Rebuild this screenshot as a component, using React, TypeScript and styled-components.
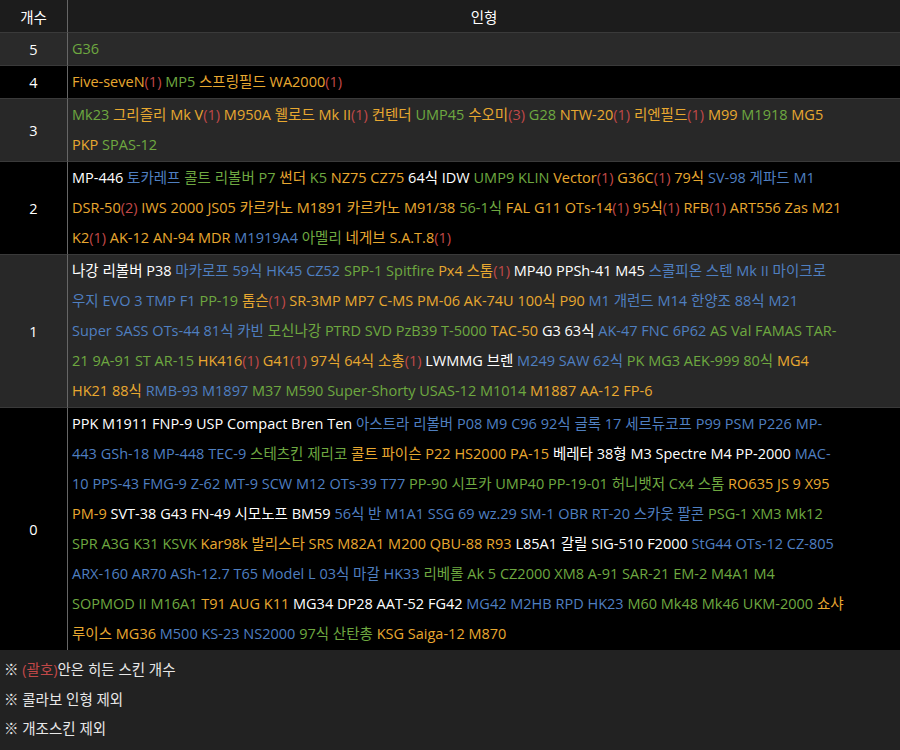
import React from "react";
import styled, { createGlobalStyle } from "styled-components";

const Global = createGlobalStyle`
  html, body { margin: 0; padding: 0; background: #222; }
  body { font-family: "Open Sans", "Noto Sans CJK KR", sans-serif; font-size: 14.5px; color: #fff; }
`;

const C: Record<string, string> = { w: "#ffffff", b: "#4f7fc0", g: "#6ea840", o: "#e8a830", r: "#c04848" };

const data: [string, string, string[]][] = [
  ["5", "#2a2a2a", ["g:G36"]],
  ["4", "#000", ["o:Five-seveN(1)|g:MP5|o:스프링필드|o:WA2000(1)"]],
  ["3", "#282828", [
    "g:Mk23|o:그리즐리 Mk V(1)|o:M950A|o:웰로드 Mk II(1)|o:컨텐더|g:UMP45|o:수오미(3)|g:G28|o:NTW-20(1)|o:리엔필드(1)|o:M99|g:M1918|o:MG5",
    "o:PKP|g:SPAS-12",
  ]],
  ["2", "#000", [
    "w:MP-446|b:토카레프|g:콜트 리볼버|g:P7|o:썬더|g:K5|o:NZ75|o:CZ75|w:64식|w:IDW|g:UMP9|g:KLIN|o:Vector(1)|o:G36C(1)|o:79식|b:SV-98|b:게파드|b:M1",
    "o:DSR-50(2)|o:IWS 2000|o:JS05|o:카르카노 M1891|o:카르카노 M91/38|g:56-1식|o:FAL|o:G11|o:OTs-14(1)|o:95식(1)|o:RFB(1)|o:ART556|o:Zas M21",
    "o:K2(1)|o:AK-12|o:AN-94|o:MDR|b:M1919A4|g:아멜리|o:네게브|o:S.A.T.8(1)",
  ]],
  ["1", "#282828", [
    "w:나강 리볼버|w:P38|b:마카로프|b:59식|b:HK45|b:CZ52|g:SPP-1|g:Spitfire|o:Px4 스톰(1)|w:MP40|w:PPSh-41|w:M45|b:스콜피온|b:스텐 Mk II|b:마이크로",
    "b:우지|b:EVO 3|b:TMP|b:F1|g:PP-19|o:톰슨(1)|o:SR-3MP|o:MP7|o:C-MS|o:PM-06|o:AK-74U|o:100식|o:P90|b:M1 개런드|b:M14|b:한양조 88식|b:M21",
    "b:Super SASS|b:OTs-44|b:81식 카빈|g:모신나강|g:PTRD|g:SVD|g:PzB39|g:T-5000|o:TAC-50|w:G3|w:63식|b:AK-47|b:FNC|b:6P62|g:AS Val|g:FAMAS|g:TAR-",
    "g:21|g:9A-91|g:ST AR-15|o:HK416(1)|o:G41(1)|o:97식|o:64식 소총(1)|w:LWMMG|w:브렌|b:M249 SAW|b:62식|g:PK|g:MG3|g:AEK-999|g:80식|o:MG4",
    "o:HK21|o:88식|b:RMB-93|b:M1897|g:M37|g:M590|g:Super-Shorty|g:USAS-12|g:M1014|o:M1887|o:AA-12|o:FP-6",
  ]],
  ["0", "#000", [
    "w:PPK|w:M1911|w:FNP-9|w:USP Compact|w:Bren Ten|b:아스트라 리볼버|b:P08|b:M9|b:C96|b:92식|b:글록 17|b:세르듀코프|b:P99|b:PSM|b:P226|b:MP-",
    "b:443|b:GSh-18|b:MP-448|b:TEC-9|g:스테츠킨|g:제리코|o:콜트 파이슨|o:P22|o:HS2000|o:PA-15|w:베레타 38형|w:M3|w:Spectre M4|w:PP-2000|b:MAC-",
    "b:10|b:PPS-43|b:FMG-9|b:Z-62|b:MT-9|b:SCW|b:M12|b:OTs-39|b:T77|g:PP-90|g:시프카|g:UMP40|g:PP-19-01|g:허니뱃저|g:Cx4 스톰|o:RO635|o:JS 9|o:X95",
    "o:PM-9|w:SVT-38|w:G43|w:FN-49|w:시모노프|w:BM59|b:56식 반|b:M1A1|b:SSG 69|b:wz.29|b:SM-1|b:OBR|b:RT-20|b:스카웃|b:팔콘|g:PSG-1|g:XM3|g:Mk12",
    "g:SPR|g:A3G|g:K31|g:KSVK|o:Kar98k|o:발리스타|o:SRS|o:M82A1|o:M200|o:QBU-88|o:R93|w:L85A1|w:갈릴|w:SIG-510|w:F2000|b:StG44|b:OTs-12|b:CZ-805",
    "b:ARX-160|b:AR70|b:ASh-12.7|b:T65|b:Model L|b:03식|b:마갈|b:HK33|g:리베롤|g:Ak 5|g:CZ2000|g:XM8|g:A-91|g:SAR-21|g:EM-2|g:M4A1|g:M4",
    "g:SOPMOD II|g:M16A1|o:T91|o:AUG|o:K11|w:MG34|w:DP28|w:AAT-52|w:FG42|b:MG42|b:M2HB|b:RPD|b:HK23|g:M60|g:Mk48|g:Mk46|g:UKM-2000|o:쇼샤",
    "o:루이스|o:MG36|b:M500|b:KS-23|b:NS2000|g:97식|g:산탄총|o:KSG|o:Saiga-12|o:M870",
  ]],
];

const Table = styled.div`
  display: grid;
  grid-template-columns: 67px 1fr;
`;
const HeadCell = styled.div<{ $left?: boolean }>`
  background: #1c1c1c;
  height: 32px;
  display: flex;
  align-items: center;
  justify-content: center;
  border-left: ${(p) => (p.$left ? "none" : "1px solid #666")};
`;
const NumCell = styled.div<{ $bg: string }>`
  background: ${(p) => p.$bg};
  display: flex;
  align-items: center;
  justify-content: center;
  border-top: 1px solid #3a3a3a;
`;
const TextCell = styled.div<{ $bg: string }>`
  background: ${(p) => p.$bg};
  border-left: 1px solid #666;
  border-top: 1px solid #3a3a3a;
  padding: 1px 4px;
  overflow: hidden;
`;
const Line = styled.div`
  line-height: 30px;
  height: 30px;
  white-space: nowrap;
`;
const Word = styled.span<{ $c: string }>`
  color: ${(p) => p.$c};
`;
const Paren = styled.span`
  color: ${C.r};
`;
const Footer = styled.div`
  background: #222;
  padding: 5px 4px 0;
  line-height: 29.5px;
  color: #e8e8e8;
`;

function renderTokens(s: string) {
  return s.split("|").map((t, i) => {
    const c = C[t[0]];
    const txt = t.slice(2);
    const m = txt.match(/^(.*?)(\(\d+\))$/);
    return (
      <React.Fragment key={i}>
        {i > 0 ? " " : ""}
        <Word $c={c}>
          {m ? m[1] : txt}
          {m ? <Paren>{m[2]}</Paren> : null}
        </Word>
      </React.Fragment>
    );
  });
}

export default function App() {
  return (
    <>
      <Global />
      <Table>
        <HeadCell $left>개수</HeadCell>
        <HeadCell>인형</HeadCell>
        {data.map(([n, bg, lines]) => (
          <React.Fragment key={n}>
            <NumCell $bg={bg}>{n}</NumCell>
            <TextCell $bg={bg}>
              {lines.map((l, i) => (
                <Line key={i}>{renderTokens(l)}</Line>
              ))}
            </TextCell>
          </React.Fragment>
        ))}
      </Table>
      <Footer>
        <div>※ <Paren>(괄호)</Paren>안은 히든 스킨 개수</div>
        <div>※ 콜라보 인형 제외</div>
        <div>※ 개조스킨 제외</div>
      </Footer>
    </>
  );
}
